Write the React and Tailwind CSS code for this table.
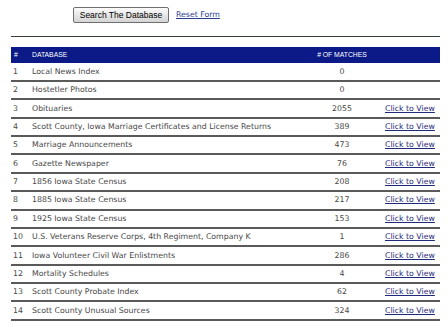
const rows = [
  [1, "Local News Index", "0", false],
  [2, "Hostetler Photos", "0", false],
  [3, "Obituaries", "2055", true],
  [4, "Scott County, Iowa Marriage Certificates and License Returns", "389", true],
  [5, "Marriage Announcements", "473", true],
  [6, "Gazette Newspaper", "76", true],
  [7, "1856 Iowa State Census", "208", true],
  [8, "1885 Iowa State Census", "217", true],
  [9, "1925 Iowa State Census", "153", true],
  [10, "U.S. Veterans Reserve Corps, 4th Regiment, Company K", "1", true],
  [11, "Iowa Volunteer Civil War Enlistments", "286", true],
  [12, "Mortality Schedules", "4", true],
  [13, "Scott County Probate Index", "62", true],
  [14, "Scott County Unusual Sources", "324", true],
];

export default function App() {
  return (
    <div className="w-[448px] h-[332px] bg-white overflow-hidden font-['DejaVu_Sans',Verdana,sans-serif] text-[7.8px] text-[#484848]">
      {/* Search controls */}
      <div className="flex items-center pt-[7px]">
        <button
          type="button"
          className="ml-[73px] w-[96px] h-[16px] rounded-[2px] border border-[#6f6f6f] bg-gradient-to-b from-[#fbfbfb] to-[#d4d4d4] font-['Liberation_Sans',Arial,sans-serif] text-[8.5px] text-black leading-none"
        >
          Search The Database
        </button>
        <a href="#" className="ml-[7px] text-[#2c3e8f] underline">
          Reset Form
        </a>
      </div>

      <div className="ml-[11px] mt-[13px] w-[429px] h-px bg-[#354235]" />

      {/* Results */}
      <div className="ml-[11px] mt-[10px] w-[429px]">
        <div className="flex items-center h-[16.4px] bg-[#0c1a87] text-white font-['Liberation_Sans',Arial,sans-serif] text-[6.8px]">
          <div className="w-[21px] pl-[3px]">#</div>
          <div className="flex-1">DATABASE</div>
          <div className="w-[84px] text-center">
            # OF MATCHES
          </div>
          <div className="w-[56px]" />
        </div>

        {rows.map(([n, name, count, link]) => (
          <div
            key={n}
            className="flex items-center h-[18.4px] border-b-2 border-[#5a5a5a]"
          >
            <div className="w-[21px] pl-[2px]">{n}</div>
            <div className="flex-1 whitespace-nowrap">{name}</div>
            <div className="w-[84px] text-center">{count}</div>
            <div className="w-[56px] pl-[1px]">
              {link && (
                <a href="#" className="text-[#1f2a7a] underline whitespace-nowrap">
                  Click to View
                </a>
              )}
            </div>
          </div>
        ))}
      </div>
    </div>
  );
}
